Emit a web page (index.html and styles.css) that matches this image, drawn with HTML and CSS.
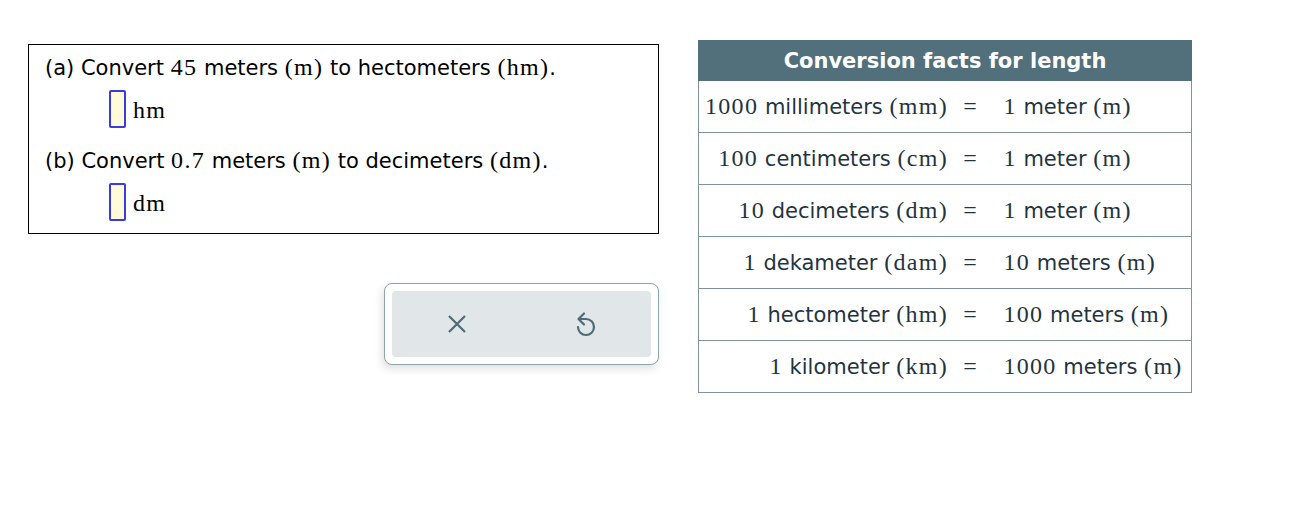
FILE: index.html
```html
<!DOCTYPE html>
<html>
<head>
<meta charset="utf-8">
<link rel="stylesheet" href="styles.css">
</head>
<body>
<div class="page">
  <div class="left">
    <div class="qbox">
      <div class="qline">(a) Convert <span class="m">45</span> meters <span class="m">(m)</span> to hectometers <span class="m">(hm)</span>.</div>
      <div class="ans"><span class="inp"></span><span class="m unit">hm</span></div>
      <div class="qline qb">(b) Convert <span class="m">0.7</span> meters <span class="m">(m)</span> to decimeters <span class="m">(dm)</span>.</div>
      <div class="ans"><span class="inp"></span><span class="m unit">dm</span></div>
    </div>
    <div class="tools">
      <div class="toolbar">
        <div class="btn">
          <svg width="20" height="18" viewBox="0 0 20 18"><path d="M2 1 L18 17 M18 1 L2 17" stroke="#4d6a77" stroke-width="2.2" fill="none"/></svg>
        </div>
        <div class="btn">
          <svg width="22" height="26" viewBox="0 0 22 26"><path d="M11 8 A8 8 0 1 1 3 16" stroke="#4d6a77" stroke-width="2.2" fill="none" stroke-linecap="round"/><path d="M11 8 H4 M9 2.5 L3.5 8 L9 13.5" stroke="#4d6a77" stroke-width="2.2" fill="none" stroke-linecap="round" stroke-linejoin="round"/></svg>
        </div>
      </div>
    </div>
  </div>
  <table class="facts">
    <thead>
      <tr><th colspan="3">Conversion facts for length</th></tr>
    </thead>
    <tbody>
      <tr><td class="l"><span class="m">1000</span> millimeters <span class="m">(mm)</span></td><td class="e m">=</td><td class="r"><span class="m">1</span> meter <span class="m">(m)</span></td></tr>
      <tr><td class="l"><span class="m">100</span> centimeters <span class="m">(cm)</span></td><td class="e m">=</td><td class="r"><span class="m">1</span> meter <span class="m">(m)</span></td></tr>
      <tr><td class="l"><span class="m">10</span> decimeters <span class="m">(dm)</span></td><td class="e m">=</td><td class="r"><span class="m">1</span> meter <span class="m">(m)</span></td></tr>
      <tr><td class="l"><span class="m">1</span> dekameter <span class="m">(dam)</span></td><td class="e m">=</td><td class="r"><span class="m">10</span> meters <span class="m">(m)</span></td></tr>
      <tr><td class="l"><span class="m">1</span> hectometer <span class="m">(hm)</span></td><td class="e m">=</td><td class="r"><span class="m">100</span> meters <span class="m">(m)</span></td></tr>
      <tr><td class="l"><span class="m">1</span> kilometer <span class="m">(km)</span></td><td class="e m">=</td><td class="r"><span class="m">1000</span> meters <span class="m">(m)</span></td></tr>
    </tbody>
  </table>
</div>
</body>
</html>
```
FILE: styles.css
```css
html, body {
  margin: 0;
  padding: 0;
  background: #fff;
}
body {
  font-family: "DejaVu Sans", Verdana, sans-serif;
  font-size: 21px;
  color: #000;
}
.page {
  display: flex;
  align-items: flex-start;
  padding: 40px 0 0 28px;
  gap: 39px;
}
.left {
  width: 631px;
  display: flex;
  flex-direction: column;
  align-items: flex-end;
  padding-top: 4px;
}
.qbox {
  box-sizing: border-box;
  width: 631px;
  border: 1px solid #000;
  padding: 7px 16px 12px 16px;
}
.m {
  font-family: "Liberation Serif", "Times New Roman", serif;
  font-size: 24px;
  letter-spacing: 1.3px;
}
.qline {
  line-height: 30px;
  height: 30px;
  white-space: nowrap;
}
.qb {
  margin-top: 17px;
}
.ans {
  display: flex;
  align-items: center;
  margin-top: 8px;
  padding-left: 64px;
  height: 38px;
}
.inp {
  box-sizing: border-box;
  width: 17px;
  height: 38px;
  border: 2px solid #3a3ae0;
  background: #fffbd9;
  border-radius: 2px;
}
.unit {
  margin-left: 7px;
  position: relative;
  top: 1px;
}
.tools {
  margin-top: 49px;
  box-sizing: border-box;
  width: 275px;
  height: 82px;
  border: 1px solid #8ea2ac;
  border-radius: 8px;
  padding: 7px;
  background: #fff;
  box-shadow: -2px 4px 8px rgba(0, 0, 0, 0.12);
}
.toolbar {
  display: flex;
  height: 66px;
  background: #e1e6e9;
  border-radius: 4px;
}
.btn {
  flex: 1;
  display: flex;
  align-items: center;
  justify-content: center;
}
.facts {
  width: 494px;
  border-collapse: collapse;
  border: 1px solid #7f939d;
  color: #1f3441;
}
.facts th {
  background: #52707b;
  color: #fff;
  font-weight: bold;
  height: 39px;
  padding: 0;
  font-size: 21px;
  border: 1px solid #52707b;
}
.facts td {
  height: 51px;
  border-top: 1px solid #7f939d;
  padding: 0;
  white-space: nowrap;
}
.facts td.l {
  text-align: right;
  padding-left: 6px;
}
.facts td.e {
  text-align: center;
  width: 47px;
  padding-right: 10px;
}
.facts td.r {
  text-align: left;
  width: 188px;
}
```
